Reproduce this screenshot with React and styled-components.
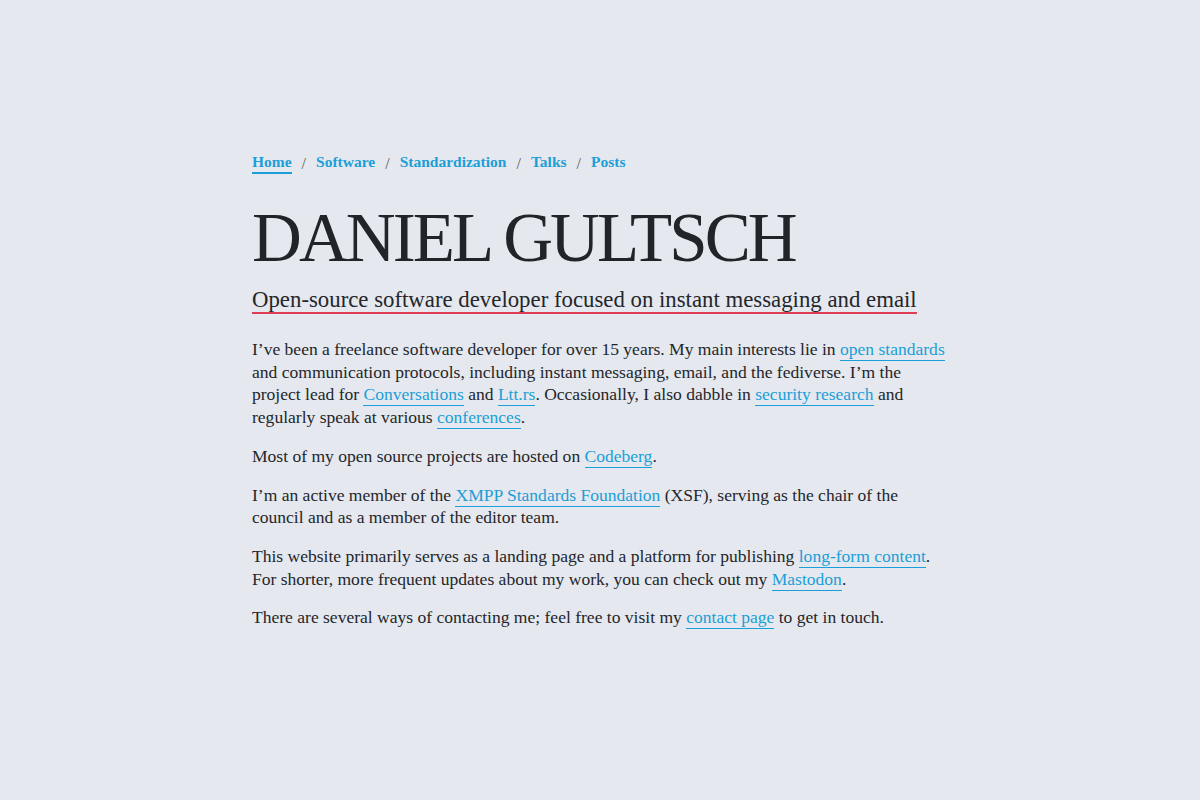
import React from 'react'
import styled, { createGlobalStyle } from 'styled-components'

const Global = createGlobalStyle`
  html, body {
    margin: 0;
    padding: 0;
    background: #e5e8ee;
  }
  body {
    font-family: "Liberation Serif", "DejaVu Serif", serif;
    color: #23262b;
  }
`

const Page = styled.main`
  width: 696px;
  margin: 0 auto;
  padding-top: 153px;
`

const Crumbs = styled.nav`
  display: flex;
  align-items: center;
  gap: 10px;
  font-size: 15.5px;
  font-weight: bold;
`

const Crumb = styled.a`
  color: #1b9fd8;
  text-decoration: none;
  border-bottom: 2px solid ${p => (p.$active ? '#1b9fd8' : 'transparent')};
  padding-bottom: 1px;
`

const Slash = styled.span`
  color: #55585d;
  font-weight: normal;
  font-size: 16px;
`

const Title = styled.h1`
  margin: 30px 0 0;
  font-size: 69px;
  font-weight: normal;
  letter-spacing: -2.9px;
  line-height: 1;
  color: #212429;
`

const Tagline = styled.p`
  display: inline-block;
  margin: 14px 0 0;
  font-size: 22.8px;
  line-height: 1.1;
  border-bottom: 2px solid #df3d55;
  padding-bottom: 0;
`

const Body = styled.div`
  margin-top: 24px;
`

const Para = styled.p`
  margin: 0 0 16px;
  font-size: 17.55px;
  line-height: 22.7px;
`

const Link = styled.a`
  color: #1b9fd8;
  text-decoration: none;
  border-bottom: 1px solid #1b9fd8;
  padding-bottom: 1px;
`

export default function App() {
  return (
    <>
      <Global />
      <Page>
        <Crumbs>
          <Crumb $active href="#">Home</Crumb>
          <Slash>/</Slash>
          <Crumb href="#">Software</Crumb>
          <Slash>/</Slash>
          <Crumb href="#">Standardization</Crumb>
          <Slash>/</Slash>
          <Crumb href="#">Talks</Crumb>
          <Slash>/</Slash>
          <Crumb href="#">Posts</Crumb>
        </Crumbs>
        <Title>DANIEL GULTSCH</Title>
        <Tagline>Open-source software developer focused on instant messaging and email</Tagline>
        <Body>
          <Para>
            I’ve been a freelance software developer for over 15 years. My main interests lie in{' '}
            <Link href="#">open standards</Link> and communication protocols, including instant
            messaging, email, and the fediverse. I’m the project lead for{' '}
            <Link href="#">Conversations</Link> and <Link href="#">Ltt.rs</Link>. Occasionally, I
            also dabble in <Link href="#">security research</Link> and regularly speak at various{' '}
            <Link href="#">conferences</Link>.
          </Para>
          <Para>
            Most of my open source projects are hosted on <Link href="#">Codeberg</Link>.
          </Para>
          <Para>
            I’m an active member of the <Link href="#">XMPP Standards Foundation</Link> (XSF),
            serving as the chair of the council and as a member of the editor team.
          </Para>
          <Para>
            This website primarily serves as a landing page and a platform for publishing{' '}
            <Link href="#">long-form content</Link>. For shorter, more frequent updates about my
            work, you can check out my <Link href="#">Mastodon</Link>.
          </Para>
          <Para>
            There are several ways of contacting me; feel free to visit my{' '}
            <Link href="#">contact page</Link> to get in touch.
          </Para>
        </Body>
      </Page>
    </>
  )
}
